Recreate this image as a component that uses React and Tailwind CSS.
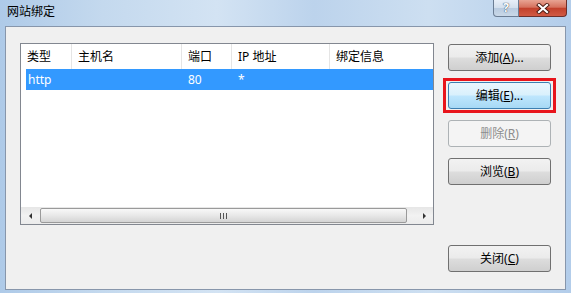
import React from "react";

const font = { fontFamily: '"Noto Sans", "Noto Sans CJK SC", sans-serif' };

function Btn({ label, hotkey, dots, variant }) {
  const base =
    "h-[27px] w-[103px] rounded-[3px] border flex items-center justify-center text-[12px] leading-none";
  const look =
    variant === "hot"
      ? "border-[#3c7fb1] bg-[linear-gradient(180deg,#eaf6fd_0%,#d9f0fc_48%,#bee6fd_52%,#a7d9f5_100%)] text-black"
      : variant === "off"
      ? "border-[#adb2b5] bg-[#f4f4f4] text-[#8d8d8d]"
      : "border-[#707070] bg-[linear-gradient(180deg,#f2f2f2_0%,#ebebeb_48%,#dddddd_52%,#cfcfcf_100%)] text-black";
  return (
    <div className={`${base} ${look}`}>
      <span>
        {label}(<span className="underline">{hotkey}</span>){dots ? "..." : ""}
      </span>
    </div>
  );
}

const cols = [
  { w: "w-[51px]", t: "类型" },
  { w: "w-[110px]", t: "主机名" },
  { w: "w-[50px]", t: "端口" },
  { w: "w-[98px]", t: "IP 地址" },
];

export default function App() {
  return (
    <div
      className="w-[571px] h-[293px] flex flex-col overflow-hidden bg-[linear-gradient(90deg,#aecae8_0%,#c4d9ee_18%,#d3e3f3_38%,#bcd3ec_55%,#cddff1_75%,#b3cdea_100%)]"
      style={font}
    >
      {/* title bar */}
      <div className="h-[26px] flex items-start shrink-0">
        <div className="pl-[7px] pt-[5px] text-[12px] leading-[14px] text-black">网站绑定</div>
        <div className="ml-auto mr-[4px] flex">
          <div className="w-[26px] h-[17px] border border-[#6b7d94] border-t-0 rounded-bl-[4px] bg-[linear-gradient(180deg,#e8eff8_0%,#d3dfec_50%,#b9cbe0_52%,#c9d8e8_100%)] flex items-center justify-center">
            <span className="text-[12px] font-bold leading-[12px] text-white [text-shadow:0_0_1px_#33475e,0_0_1px_#33475e]">?</span>
          </div>
          <div className="w-[48px] h-[17px] border border-[#6d2f2a] border-t-0 border-l-0 rounded-br-[4px] bg-[linear-gradient(180deg,#e8a493_0%,#d6725e_45%,#c2412c_52%,#d15a44_100%)] flex items-center justify-center">
            <svg width="14" height="11" viewBox="0 0 14 11">
              <path d="M3 2 L11 9 M11 2 L3 9" stroke="#4a1a12" strokeWidth="4" strokeLinecap="square" />
              <path d="M3 2 L11 9 M11 2 L3 9" stroke="#ffffff" strokeWidth="2.2" strokeLinecap="square" />
            </svg>
          </div>
        </div>
      </div>

      {/* client area */}
      <div className="mx-[5px] h-[264px] border border-[#8796ab] bg-[#f0f0f0] flex pl-[14px] shrink-0">
        {/* list view */}
        <div className="pt-[16px]">
          <div className="w-[414px] h-[182px] border border-[#828790] bg-white flex flex-col text-[12px]">
            <div className="h-[25px] flex items-stretch text-black">
              {cols.map((c) => (
                <div key={c.t} className={`${c.w} border-r border-[#e5e5e5] flex items-center pl-[6px]`}>
                  {c.t}
                </div>
              ))}
              <div className="flex-1 flex items-center pl-[6px]">绑定信息</div>
            </div>
            <div className="h-[21px] ml-[5px] bg-[#3399ff] text-white flex items-center">
              <div className="w-[46px] pl-[2px]">http</div>
              <div className="w-[110px]" />
              <div className="w-[50px] pl-[6px]">80</div>
              <div className="w-[98px] pl-[6px]">*</div>
            </div>
            <div className="flex-1" />
            {/* horizontal scrollbar */}
            <div className="h-[17px] flex items-stretch bg-[linear-gradient(180deg,#e6e6e6_0%,#f2f2f2_50%,#ebebeb_100%)]">
              <div className="w-[19px] flex items-center justify-center">
                <div className="w-0 h-0 border-y-[3px] border-y-transparent border-r-[3px] border-r-[#333]" />
              </div>
              <div className="flex-1 flex items-stretch py-[1px]">
                <div className="w-[367px] rounded-[2px] border border-[#9a9a9a] bg-[linear-gradient(180deg,#f8f8f8_0%,#e8e8e8_50%,#d4d4d4_100%)] flex items-center justify-center gap-[2px]">
                  <div className="w-[1px] h-[6px] bg-[#555]" />
                  <div className="w-[1px] h-[6px] bg-[#555]" />
                  <div className="w-[1px] h-[6px] bg-[#555]" />
                </div>
              </div>
              <div className="w-[18px] flex items-center justify-center">
                <div className="w-0 h-0 border-y-[3px] border-y-transparent border-l-[3px] border-l-[#333]" />
              </div>
            </div>
          </div>
        </div>

        {/* buttons */}
        <div className="ml-[14px] pt-[17px] pb-[17px] flex flex-col gap-[11px]">
          <Btn label="添加" hotkey="A" dots />
          <div className="relative">
            <Btn label="编辑" hotkey="E" dots variant="hot" />
            <div className="absolute left-[-5px] right-[-5px] top-[-4px] bottom-[-4px] border-[3px] border-[#e8141b]" />
          </div>
          <Btn label="删除" hotkey="R" variant="off" />
          <Btn label="浏览" hotkey="B" />
          <div className="mt-auto">
            <Btn label="关闭" hotkey="C" />
          </div>
        </div>
      </div>
    </div>
  );
}
